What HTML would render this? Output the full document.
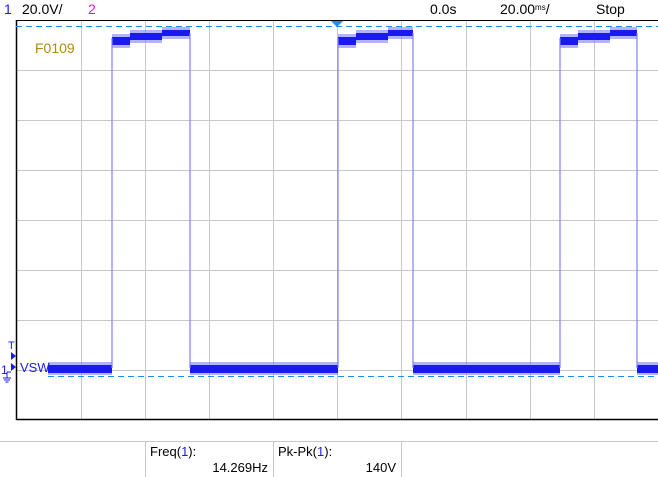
<!DOCTYPE html>
<html><head><style>
body{margin:0;background:#fff;width:658px;height:477px;overflow:hidden;font-family:"Liberation Sans",sans-serif}
svg{position:absolute;left:0;top:0}
</style></head><body>
<svg width="658" height="477" viewBox="0 0 658 477" font-family="Liberation Sans, sans-serif">
<g stroke="#c8c8c8" stroke-width="1">
<line x1="81.5" y1="20" x2="81.5" y2="419"/><line x1="145.5" y1="20" x2="145.5" y2="419"/><line x1="209.5" y1="20" x2="209.5" y2="419"/><line x1="273.5" y1="20" x2="273.5" y2="419"/><line x1="401.5" y1="20" x2="401.5" y2="419"/><line x1="466.5" y1="20" x2="466.5" y2="419"/><line x1="530.5" y1="20" x2="530.5" y2="419"/><line x1="594.5" y1="20" x2="594.5" y2="419"/>
<line x1="16" y1="70.5" x2="658" y2="70.5"/><line x1="16" y1="120.5" x2="658" y2="120.5"/><line x1="16" y1="170.5" x2="658" y2="170.5"/><line x1="16" y1="220.5" x2="658" y2="220.5"/><line x1="16" y1="270.5" x2="658" y2="270.5"/><line x1="16" y1="320.5" x2="658" y2="320.5"/><line x1="16" y1="370.5" x2="658" y2="370.5"/>
<line x1="0" y1="441.5" x2="658" y2="441.5"/>
<line x1="145.5" y1="442" x2="145.5" y2="477"/><line x1="273.5" y1="442" x2="273.5" y2="477"/><line x1="401.5" y1="442" x2="401.5" y2="477"/>
</g>
<line x1="337.5" y1="20" x2="337.5" y2="419" stroke="#c8c8c8"/>
<line x1="16" y1="20.5" x2="658" y2="20.5" stroke="#000"/>
<line x1="16.5" y1="20" x2="16.5" y2="420" stroke="#000" stroke-width="1.5"/>
<line x1="16" y1="419.5" x2="658" y2="419.5" stroke="#000" stroke-width="1.5"/>
<line x1="16" y1="26.5" x2="658" y2="26.5" stroke="#1e8cf0" stroke-dasharray="6,4"/>
<line x1="48" y1="376.5" x2="658" y2="376.5" stroke="#1e8cf0" stroke-dasharray="6,4"/>
<path d="M331 21 L343 21 L337 27 Z" fill="#1e8cf0"/>
<g fill="#8080ff" opacity="0.6">
<rect x="48" y="362" width="64" height="13"/><rect x="190" y="362" width="148" height="13"/><rect x="413" y="362" width="147" height="13"/><rect x="637" y="362" width="21" height="13"/>
<rect x="112" y="34" width="18" height="14"/><rect x="130" y="30" width="32" height="13"/><rect x="162" y="27" width="28" height="12"/>
<rect x="338" y="34" width="18" height="14"/><rect x="356" y="30" width="32" height="13"/><rect x="388" y="27" width="25" height="12"/>
<rect x="560" y="34" width="18" height="14"/><rect x="578" y="30" width="32" height="13"/><rect x="610" y="27" width="27" height="12"/>
</g>
<g fill="#1a1aee">
<rect x="48" y="365" width="64" height="8"/><rect x="190" y="365" width="148" height="8"/><rect x="413" y="365" width="147" height="8"/><rect x="637" y="365" width="21" height="8"/>
<rect x="112" y="37" width="18" height="8"/><rect x="130" y="33" width="32" height="7"/><rect x="162" y="30" width="28" height="6"/>
<rect x="338" y="37" width="18" height="8"/><rect x="356" y="33" width="32" height="7"/><rect x="388" y="30" width="25" height="6"/>
<rect x="560" y="37" width="18" height="8"/><rect x="578" y="33" width="32" height="7"/><rect x="610" y="30" width="27" height="6"/>
</g>
<g stroke="#8080ff" stroke-width="1.2">
<line x1="112" y1="38" x2="112" y2="368"/><line x1="190" y1="33" x2="190" y2="368"/>
<line x1="338" y1="38" x2="338" y2="368"/><line x1="413" y1="33" x2="413" y2="368"/>
<line x1="560" y1="38" x2="560" y2="368"/><line x1="637" y1="33" x2="637" y2="368"/>
</g>
<g font-size="14" fill="#000">
<text x="4" y="14" fill="#1a1aee">1</text>
<text x="22" y="14">20.0V/</text>
<text x="88" y="14" fill="#cc22cc">2</text>
<text x="430" y="14">0.0s</text>
<text x="500" y="14">20.00<tspan font-size="8" dy="-4">ms</tspan><tspan dy="4">/</tspan></text>
<text x="596" y="14">Stop</text>
</g>
<text x="35" y="53" font-size="14" fill="#b08a10">F0109</text>
<g fill="#1a1aee" font-size="12">
<text x="8" y="349" font-size="11">T</text>
<path d="M11 352 L16 356 L11 360 Z"/>
<text x="1" y="374" font-size="12">1</text>
<path d="M11 363 L16 367 L11 371 Z"/>
<text x="20" y="372" font-size="13">VSW</text>
<path d="M7 372 L7 378 M3 378 L11 378 M4 380 L10 380 M5.5 382 L8.5 382 M7 372 L11 372" stroke="#1a1aee" fill="none"/>
</g>
<g font-size="13" fill="#000">
<text x="150" y="456">Freq(<tspan fill="#1a1aee">1</tspan>):</text>
<text x="268" y="472" text-anchor="end">14.269Hz</text>
<text x="278" y="456">Pk-Pk(<tspan fill="#1a1aee">1</tspan>):</text>
<text x="396" y="472" text-anchor="end">140V</text>
</g>
</svg>
</body></html>
